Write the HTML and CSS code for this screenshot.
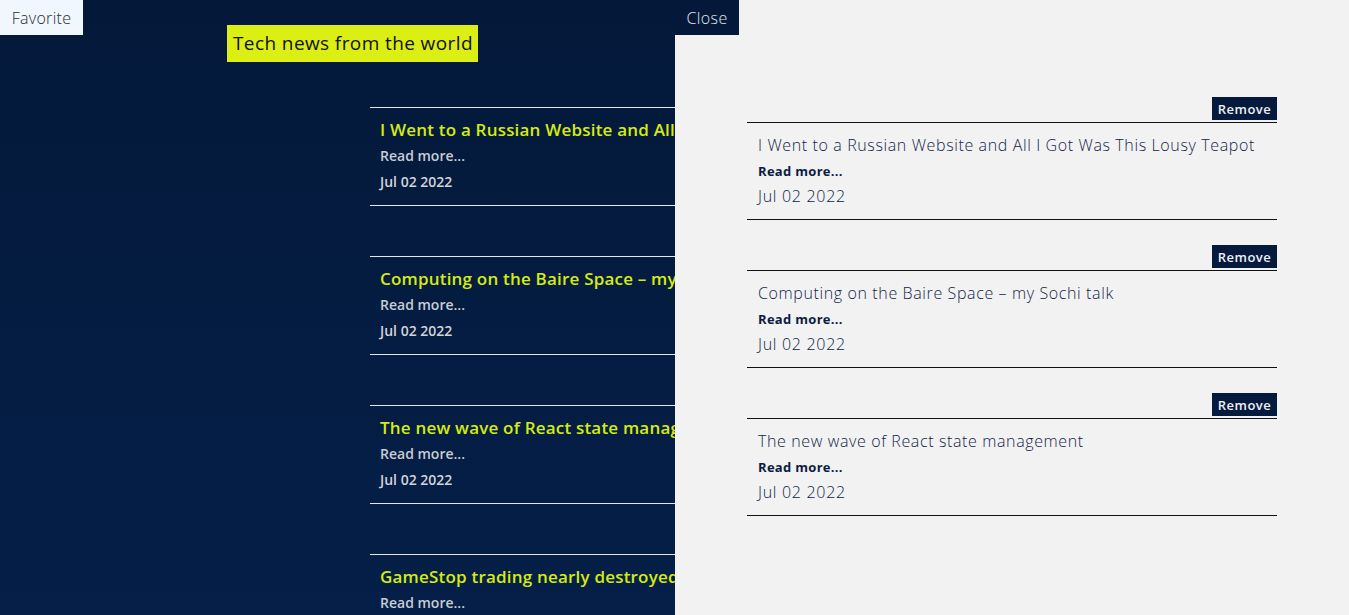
FILE: index.html
```html
<!DOCTYPE html>
<html lang="en">
<head>
<meta charset="utf-8">
<title>Tech news</title>
<link rel="stylesheet" href="styles.css">
</head>
<body>
<div class="page">
  <header class="top">
    <button class="fav-btn">Favorite</button>
    <h1 class="title">Tech news from the world</h1>
  </header>
  <main class="list">
    <article class="news">
      <h2 class="news-title">I Went to a Russian Website and All I Got Was This Lousy Teapot</h2>
      <a class="news-more">Read more...</a>
      <p class="news-date">Jul 02 2022</p>
    </article>
    <article class="news">
      <h2 class="news-title">Computing on the Baire Space – my Sochi talk</h2>
      <a class="news-more">Read more...</a>
      <p class="news-date">Jul 02 2022</p>
    </article>
    <article class="news">
      <h2 class="news-title">The new wave of React state management</h2>
      <a class="news-more">Read more...</a>
      <p class="news-date">Jul 02 2022</p>
    </article>
    <article class="news">
      <h2 class="news-title">GameStop trading nearly destroyed the stock market</h2>
      <a class="news-more">Read more...</a>
      <p class="news-date">Jul 02 2022</p>
    </article>
  </main>
</div>
<aside class="drawer">
  <button class="close-btn">Close</button>
  <div class="fav-list">
    <div class="fav">
      <div class="fav-head"><button class="remove-btn">Remove</button></div>
      <div class="fav-body">
        <p class="fav-title">I Went to a Russian Website and All I Got Was This Lousy Teapot</p>
        <a class="fav-more">Read more...</a>
        <p class="fav-date">Jul 02 2022</p>
      </div>
    </div>
    <div class="fav">
      <div class="fav-head"><button class="remove-btn">Remove</button></div>
      <div class="fav-body">
        <p class="fav-title">Computing on the Baire Space – my Sochi talk</p>
        <a class="fav-more">Read more...</a>
        <p class="fav-date">Jul 02 2022</p>
      </div>
    </div>
    <div class="fav">
      <div class="fav-head"><button class="remove-btn">Remove</button></div>
      <div class="fav-body">
        <p class="fav-title">The new wave of React state management</p>
        <a class="fav-more">Read more...</a>
        <p class="fav-date">Jul 02 2022</p>
      </div>
    </div>
  </div>
</aside>
</body>
</html>
```
FILE: styles.css
```css
* { box-sizing: border-box; }
html, body { margin: 0; padding: 0; height: 100%; }
body {
  font-family: "Open Sans", "Liberation Sans", sans-serif;
  background: linear-gradient(180deg, #04193a 0%, #051f48 100%);
  overflow: hidden;
}
.page { height: 615px; overflow: hidden; }
.top {
  display: flex;
  align-items: flex-start;
}
.fav-btn {
  font-family: inherit;
  font-size: 16px;
  font-weight: 300;
  letter-spacing: 0.3px;
  color: #2a2a2a;
  background: #f0f7ff;
  border: 0;
  height: 35px;
  width: 83px;
  padding: 0;
  margin: 0;
}
.title {
  margin: 25px 0 0 144px;
  background: #dcef14;
  color: #111;
  font-size: 19px;
  font-weight: 500;
  letter-spacing: 0.4px;
  line-height: 37px;
  height: 37px;
  padding: 0 5px 0 6px;
}
.list {
  margin: 45px 0 0 370px;
  width: 609px;
  display: flex;
  flex-direction: column;
  gap: 50px;
}
.news {
  border-top: 1px solid #e6e6ea;
  border-bottom: 1px solid #e6e6ea;
  padding: 9px 10px 11px;
  height: 99px;
  display: flex;
  flex-direction: column;
  flex-shrink: 0;
}
.news-title {
  margin: 0;
  font-size: 17px;
  font-weight: 600;
  letter-spacing: 0.2px;
  line-height: 26px;
  color: #d6ec0e;
  white-space: nowrap;
}
.news-more {
  font-size: 14px;
  font-weight: 600;
  line-height: 26px;
  color: #c8ccd4;
}
.news-date {
  margin: 0;
  font-size: 14px;
  font-weight: 600;
  line-height: 26px;
  color: #d2d4d8;
}
.drawer {
  position: fixed;
  top: 0;
  left: 675px;
  width: 674px;
  height: 100%;
  background: #f2f2f2;
  padding: 97px 72px 0;
}
.close-btn {
  position: absolute;
  top: 0;
  left: 0;
  width: 64px;
  height: 35px;
  border: 0;
  padding: 0;
  background: #04193a;
  color: #e4e6ea;
  font-family: inherit;
  font-size: 16px;
  font-weight: 300;
  letter-spacing: 0.4px;
}
.fav-list {
  width: 530px;
  display: flex;
  flex-direction: column;
  gap: 25px;
}
.fav-head {
  display: flex;
  justify-content: flex-end;
  margin-bottom: 2px;
}
.remove-btn {
  font-family: inherit;
  font-size: 13px;
  font-weight: 600;
  letter-spacing: 0.5px;
  color: #eef0f4;
  background: #061a3e;
  border: 0;
  height: 23px;
  width: 65px;
  padding: 0;
}
.fav-body {
  border-top: 1px solid #111;
  border-bottom: 1px solid #111;
  padding: 10px 11px 11px;
  height: 98px;
  color: #0b1d42;
  display: flex;
  flex-direction: column;
}
.fav-title {
  margin: 0;
  font-size: 16px;
  font-weight: 300;
  letter-spacing: 0.62px;
  line-height: 24px;
  color: #14254a;
}
.fav-more {
  font-size: 13px;
  font-weight: 700;
  letter-spacing: 0.3px;
  line-height: 20px;
  margin-top: 4px;
}
.fav-date {
  margin: 3px 0 0;
  font-size: 16px;
  font-weight: 300;
  letter-spacing: 0.7px;
  line-height: 24px;
  color: #0b1d42;
}
```
